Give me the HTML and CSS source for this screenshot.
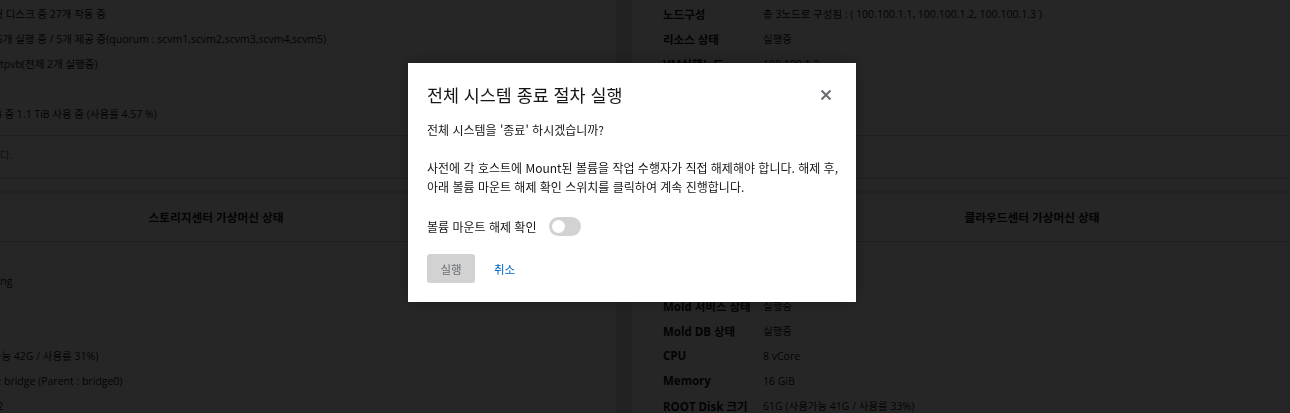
FILE: index.html
```html
<!DOCTYPE html>
<html lang="ko">
<head>
<meta charset="utf-8">
<title>전체 시스템 종료 절차 실행</title>
<link rel="stylesheet" href="styles.css">
</head>
<body>
<div class="page">
  <section class="card">
    <div class="card-body">
      <div class="row"><span class="lbl">디스크</span><span class="val">SSD 총 30개 디스크 중 27개 작동 중</span></div>
      <div class="row"><span class="lbl">모니터</span><span class="val">전체 scvm 5개 실행 중 / 5개 제공 중(quorum : scvm1,scvm2,scvm3,scvm4,scvm5)</span></div>
      <div class="row"><span class="lbl">게이트웨이</span><span class="val">rgw : glue1tpvb(전체 2개 실행중)</span></div>
      <div class="row"><span class="lbl">상태</span><span class="val">정상</span></div>
      <div class="row"><span class="lbl">스토리지 용량</span><span class="val">전체: 24 TiB 중 1.1 TiB 사용 중 (사용률 4.57 %)</span></div>
    </div>
    <div class="card-footer ok">스토리지 클러스터가 정상 상태입니다.</div>
  </section>

  <section class="card">
    <div class="card-body">
      <div class="row"><span class="lbl">노드구성</span><span class="val">총 3노드로 구성됨 : ( 100.100.1.1, 100.100.1.2, 100.100.1.3 )</span></div>
      <div class="row"><span class="lbl">리소스 상태</span><span class="val">실행중</span></div>
      <div class="row"><span class="lbl">VM실행노드</span><span class="val">100.100.1.2</span></div>
      <div class="row"><span class="lbl">펜싱 상태</span><span class="val">정상</span></div>
      <div class="row"><span class="lbl">가상머신 수</span><span class="val">1개</span></div>
    </div>
    <div class="card-footer ok"></div>
  </section>

  <section class="card">
    <header class="card-head">스토리지센터 가상머신 상태</header>
    <div class="card-body tall">
      <div class="row"><span class="lbl">가상머신 상태</span><span class="val">상태: Running</span></div>
      <div class="row"><span class="lbl">CPU</span><span class="val">8 vCore</span></div>
      <div class="row"><span class="lbl">Memory</span><span class="val">16 GiB</span></div>
      <div class="row"><span class="lbl">ROOT Disk 크기</span><span class="val">61G (사용가능 42G / 사용률 31%)</span></div>
      <div class="row"><span class="lbl">관리 NIC</span><span class="val">vNIC Type : bridge (Parent : bridge0)</span></div>
      <div class="row"><span class="lbl">관리 IP</span><span class="val">10.100.1.12</span></div>
    </div>
  </section>

  <section class="card">
    <header class="card-head">클라우드센터 가상머신 상태</header>
    <div class="card-body tall">
      <div class="row"><span class="lbl">가상머신 상태</span><span class="val">실행중</span></div>
      <div class="row"><span class="lbl">Mold 서비스 상태</span><span class="val">실행중</span></div>
      <div class="row"><span class="lbl">Mold DB 상태</span><span class="val">실행중</span></div>
      <div class="row"><span class="lbl">CPU</span><span class="val">8 vCore</span></div>
      <div class="row"><span class="lbl">Memory</span><span class="val">16 GiB</span></div>
      <div class="row"><span class="lbl">ROOT Disk 크기</span><span class="val">61G (사용가능 41G / 사용률 33%)</span></div>
    </div>
  </section>
</div>

<div class="backdrop">
  <div class="modal" role="dialog" aria-modal="true">
    <div class="modal-head">
      <h1 class="modal-title">전체 시스템 종료 절차 실행</h1>
      <button class="close" aria-label="닫기">
        <svg width="10" height="10" viewBox="0 0 10 10"><path d="M1.3 1.3 L8.7 8.7 M8.7 1.3 L1.3 8.7" stroke="#6a6e73" stroke-width="2.1" stroke-linecap="square" fill="none"/></svg>
      </button>
    </div>
    <div class="modal-body">
      <p>전체 시스템을 '종료' 하시겠습니까?</p>
      <p class="gap">사전에 각 호스트에 Mount된 볼륨을 작업 수행자가 직접 해제해야 합니다. 해제 후, 아래 볼륨 마운트 해제 확인 스위치를 클릭하여 계속 진행합니다.</p>
    </div>
    <div class="switch-row">
      <span class="switch-label">볼륨 마운트 해제 확인</span>
      <span class="switch"><span class="knob"></span></span>
    </div>
    <div class="actions">
      <button class="btn-primary" disabled>실행</button>
      <button class="btn-link">취소</button>
    </div>
  </div>
</div>
</body>
</html>
```

FILE: styles.css
```css
html, body {
  margin: 0;
  padding: 0;
}
body {
  width: 1290px;
  height: 413px;
  overflow: hidden;
  background: #e4e4e4;
  font-family: "Open Sans", "Noto Sans CJK KR", sans-serif;
  font-size: 10.5px;
  color: #151515;
}
.page {
  display: grid;
  grid-template-columns: 800px 800px;
  column-gap: 16px;
  row-gap: 4px;
  margin-left: -184px;
  width: 1616px;
}
.card {
  background: #ffffff;
}
.card-body {
  padding: 1px 31px 9px;
}
.card-body.tall {
  padding-top: 26px;
}
.row {
  display: grid;
  grid-template-columns: 100px 1fr;
  height: 25px;
  align-items: center;
  white-space: nowrap;
}
.lbl {
  font-size: 11.5px;
  font-weight: 700;
  color: #151515;
}
.val {
  color: #151515;
}
.card-footer {
  border-top: 1px solid #d2d2d2;
  border-bottom: 1px solid #d2d2d2;
  padding: 4px 31px 8px;
  height: 30px;
  line-height: 30px;
  margin-bottom: 11px;
  white-space: nowrap;
}
.card-footer.ok {
  color: #3e8635;
}
.card-head {
  height: 47px;
  line-height: 47px;
  text-align: center;
  font-size: 11.7px;
  font-weight: 700;
  border-bottom: 1px solid #d2d2d2;
}

.backdrop {
  position: fixed;
  inset: 0;
  background: rgba(0, 0, 0, 0.85);
  padding: 63px 0 0 408px;
}
.modal {
  width: 448px;
  box-sizing: border-box;
  background: #ffffff;
  padding: 22px 17px 19px 19px;
  font-family: "Noto Sans CJK KR", sans-serif;
  color: #151515;
  box-shadow: 0 0 16px rgba(0, 0, 0, 0.3);
}
.modal-head {
  display: flex;
  align-items: center;
  justify-content: space-between;
  height: 20px;
}
.modal-title {
  margin: 0;
  font-size: 17.4px;
  font-weight: 400;
  line-height: 20px;
  white-space: nowrap;
}
.close {
  width: 22px;
  height: 20px;
  margin-right: 2px;
  padding: 0;
  border: 0;
  background: none;
  display: flex;
  align-items: center;
  justify-content: center;
}
.modal-body {
  margin-top: 15px;
  font-size: 12px;
  line-height: 19px;
}
.modal-body p {
  margin: 0;
}
.modal-body p.gap {
  margin-top: 19px;
}
.switch-row {
  margin-top: 20px;
  height: 20px;
  display: flex;
  align-items: center;
  font-size: 12px;
}
.switch {
  margin-left: 13px;
  width: 32px;
  height: 19px;
  border-radius: 10px;
  background: #d2d2d2;
  display: flex;
  align-items: center;
  padding-left: 3px;
  box-sizing: border-box;
}
.knob {
  width: 13px;
  height: 13px;
  border-radius: 50%;
  background: #ffffff;
}
.actions {
  margin-top: 18px;
  display: flex;
  align-items: center;
}
.btn-primary {
  height: 29px;
  width: 48px;
  border: 0;
  border-radius: 3px;
  background: #d2d2d2;
  color: #6a6e73;
  font-family: "Noto Sans CJK KR", sans-serif;
  font-size: 11.5px;
  padding: 0;
}
.btn-link {
  margin-left: 12px;
  border: 0;
  background: none;
  color: #0066cc;
  font-family: "Noto Sans CJK KR", sans-serif;
  font-size: 11.5px;
  padding: 0 7px;
  height: 29px;
}
```
